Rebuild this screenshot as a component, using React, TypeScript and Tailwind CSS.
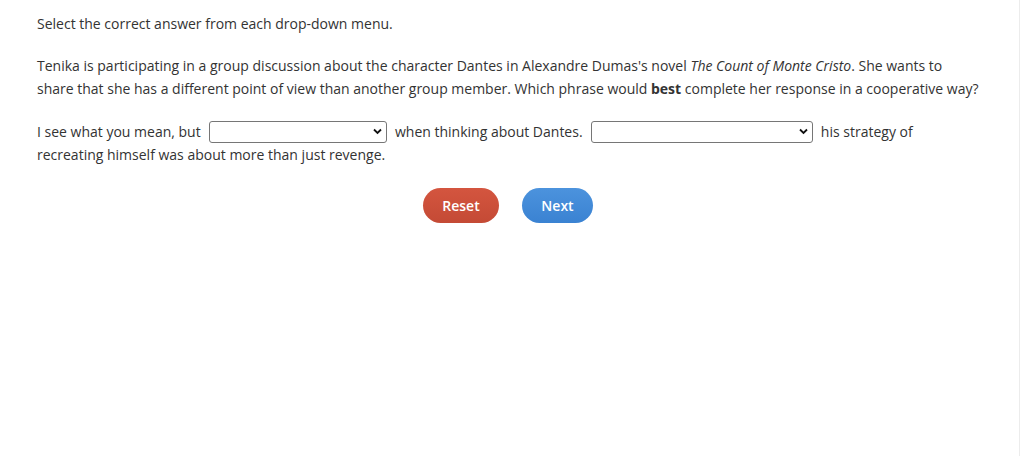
import React from "react";

function Select({ w }: { w: string }) {
  return (
    <span className={`relative inline-block align-middle ${w} h-[22px] ml-[5px] mr-[4px] -mt-[3px]`}>
      <select className={`appearance-none ${w} h-[22px] border border-[#767676] rounded-[3px] bg-white text-[13px] outline-none`}>
        <option></option>
      </select>
      <svg className="pointer-events-none absolute right-[5px] top-[7px]" width="9" height="7" viewBox="0 0 9 7">
        <path d="M1 1.5 L4.5 5 L8 1.5" fill="none" stroke="#111" strokeWidth="1.8" />
      </svg>
    </span>
  );
}

export default function App() {
  return (
    <div className="w-[1020px] h-[456px] bg-white flex font-['Open_Sans',sans-serif] text-[14px] leading-[23px] text-[#333]">
      <div className="flex-1 pl-[37px] pr-[40px] pt-[12px] border-r border-[#ececec]">
        <p>Select the correct answer from each drop-down menu.</p>
        <p className="mt-[19px]">
          Tenika is participating in a group discussion about the character Dantes in Alexandre Dumas's novel{" "}
          <i>The Count of Monte Cristo</i>. She wants to share that she has a different point of view than another
          group member. Which phrase would <b>best</b> complete her response in a cooperative way?
        </p>
        <p className="mt-[20px]">
          I see what you mean, but <Select w="w-[178px]" /> when thinking about Dantes. <Select w="w-[222px]" /> his
          strategy of recreating himself was about more than just revenge.
        </p>
        <div className="flex justify-center gap-[23px] mt-[22px]">
          <button className="w-[76px] h-[35px] rounded-full bg-gradient-to-b from-[#d4553f] to-[#c44a35] text-white text-[14px] font-semibold">
            Reset
          </button>
          <button className="w-[71px] h-[35px] rounded-full bg-gradient-to-b from-[#4c93dd] to-[#3a82d2] text-white text-[14px] font-semibold">
            Next
          </button>
        </div>
      </div>
    </div>
  );
}
